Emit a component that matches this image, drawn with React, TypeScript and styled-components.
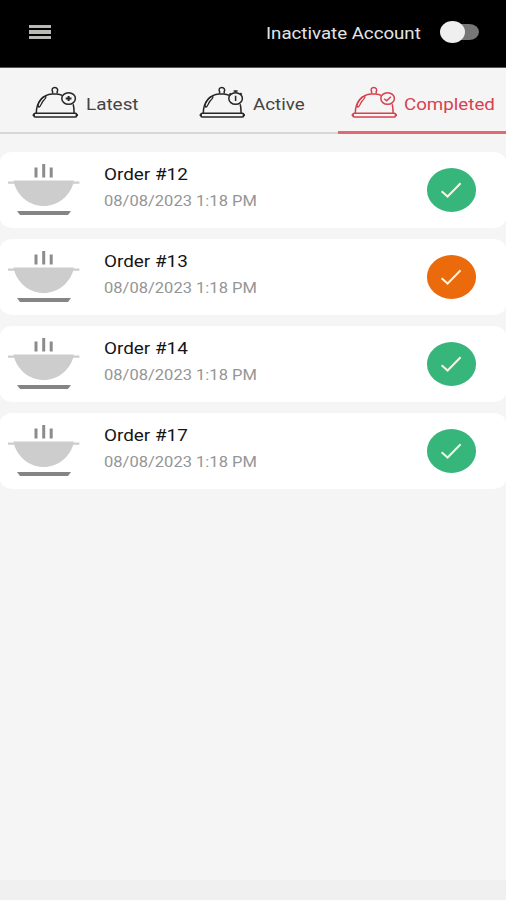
import React from 'react';
import styled, { createGlobalStyle } from 'styled-components';

const GlobalStyle = createGlobalStyle`
  * { box-sizing: border-box; }
  body { margin: 0; background: #f4f4f4; font-family: Roboto, "Liberation Sans", sans-serif; }
`;

const Screen = styled.div`
  display: flex;
  flex-direction: column;
  height: 900px;
  overflow: hidden;
  background: #f5f5f5;
`;

const Header = styled.header`
  display: flex;
  align-items: center;
  height: 68px;
  padding: 0 27px 2px 29px;
  background: #000;
  border-bottom: 1px solid #555;
`;

const MenuButton = styled.button`
  display: flex;
  flex-direction: column;
  gap: 2px;
  width: 22px;
  margin-top: -1px;
  padding: 0;
  border: 0;
  background: none;
`;

const MenuBar = styled.span`
  height: 3.4px;
  background: #b9b9b6;
`;

/* Wide-set text: the glyphs are stretched horizontally from the left edge. */
const WideText = styled.span<{ $size: number; $width: number; $stretch: number; $color: string }>`
  display: block;
  width: ${(p) => p.$width}px;
  font-size: ${(p) => p.$size}px;
  line-height: 20px;
  color: ${(p) => p.$color};
  white-space: nowrap;
  transform: scaleX(${(p) => p.$stretch});
  transform-origin: left center;
`;

const AccountControl = styled.div`
  display: flex;
  align-items: center;
  gap: 20px;
  margin-left: auto;
  padding-top: 3px;
`;

const SwitchTrack = styled.span`
  display: flex;
  align-items: center;
  width: 38px;
  height: 16px;
  margin-top: -4px;
  border-radius: 10px / 8px;
  background: #777;
`;

const SwitchKnob = styled.span`
  width: 25px;
  height: 22px;
  margin-left: -1px;
  border-radius: 50%;
  background: #efefef;
`;

const Tabs = styled.nav`
  display: grid;
  grid-template-columns: 169px 169px 168px;
  height: 66px;
`;

const Tab = styled.button<{ $active: boolean; $left: number; $gap: number }>`
  display: flex;
  align-items: center;
  gap: ${(p) => p.$gap}px;
  height: ${(p) => (p.$active ? 66 : 65.5)}px;
  padding: ${(p) => (p.$active ? 6 : 5.5)}px 0 0 ${(p) => p.$left}px;
  border: 0;
  border-bottom: ${(p) => (p.$active ? '3px solid #df6a73' : '2px solid #d6d6d6')};
  background: none;
  color: ${(p) => (p.$active ? '#d5414d' : '#262626')};
  font-family: inherit;
  text-align: left;

  ${WideText} {
    padding-top: 5px;
  }
`;

const Cloche = styled.svg`
  flex: none;
  width: 46px;
  height: 33px;
  fill: none;
  stroke: currentColor;
  stroke-width: 1.5;
`;

const OrderList = styled.main`
  display: flex;
  flex-direction: column;
  gap: 11.1px;
  padding-top: 18px;
  flex: 1;
`;

const OrderCard = styled.article`
  display: flex;
  align-items: center;
  height: 76px;
  padding: 0 30px 0 7px;
  border-radius: 12px / 10px;
  background: #fff;
`;

const BowlIcon = styled.svg`
  width: 74px;
  height: 54px;
  margin-right: 23px;
`;

const OrderInfo = styled.div`
  display: flex;
  flex-direction: column;
  gap: 7px;
  margin-top: -3px;
`;

const StatusBadge = styled.span<{ $color: string }>`
  display: flex;
  align-items: center;
  justify-content: center;
  width: 49.5px;
  height: 44px;
  margin: -1px 0 0 auto;
  border-radius: 50%;
  background: ${(p) => p.$color};
`;

const SystemBar = styled.footer`
  height: 20px;
  background: #f0f0f0;
`;

type TabKind = 'plus' | 'timer' | 'check';

function ClocheIcon({ kind }: { kind: TabKind }) {
  return (
    <Cloche viewBox="0 0 46 33">
      <rect x="1.8" y="27.2" width="43" height="3.8" rx="1.5" />
      <path d="M1.8 28.2v1.8M44.8 28.2v1.8" strokeWidth="2.4" />
      <path d="M4.3 27C4.3 16 11 8.4 20 7.9h4.5c2.6.2 4 .5 5.6 1.4M41.2 18.2c.6 2.3.9 5 .9 8.8" />
      <path d="M20.6 7.4V5.7C19.4 3.5 20.4 1.5 22.8 1.5s3.6 2 2.4 4.2v1.7" />
      <path d="M6.9 21.2c-1.3-.8-.8-3.2.7-5.8 1.8-3 4.2-5.2 5.9-5 1.2.4-.3 2.3-2.2 4.4-2 2.2-2.4 5.9-4.4 6.4z" strokeWidth="1.3" />
      <ellipse cx="36.6" cy="12.5" rx="6.8" ry="5.8" />
      {kind === 'plus' && <path d="M33.7 12.5h5.8M36.6 10v5" strokeWidth="2" />}
      {kind === 'timer' && <path d="M36.6 9.7v5.4M36.6 6.6V4.9M34.6 5h4M41.3 7.2l1.5 1.2M31.8 7.4l-1.4 1.2" />}
      {kind === 'check' && <path d="M33.3 12.7l2.3 2 4.3-4" />}
    </Cloche>
  );
}

const tabs: { label: string; kind: TabKind; left: number; gap: number; width: number; stretch: number }[] = [
  { label: 'Latest', kind: 'plus', left: 32, gap: 8, width: 52, stretch: 1.18 },
  { label: 'Active', kind: 'timer', left: 30, gap: 8, width: 52, stretch: 1.17 },
  { label: 'Completed', kind: 'check', left: 12.5, gap: 7.5, width: 90, stretch: 1.17 },
];

const orders = [
  { number: 12, color: '#37b67c' },
  { number: 13, color: '#ea6a0c' },
  { number: 14, color: '#37b67c' },
  { number: 17, color: '#37b67c' },
];

export default function App() {
  return (
    <>
      <GlobalStyle />
      <Screen>
        <Header>
          <MenuButton aria-label="Menu">
            <MenuBar />
            <MenuBar />
            <MenuBar />
          </MenuButton>
          <AccountControl>
            <WideText $size={16} $width={155} $stretch={1.167} $color="#e4e4e4">Inactivate Account</WideText>
            <SwitchTrack role="switch" aria-checked={false}>
              <SwitchKnob />
            </SwitchTrack>
          </AccountControl>
        </Header>
        <Tabs>
          {tabs.map((tab) => (
            <Tab key={tab.kind} $active={tab.kind === 'check'} $left={tab.left} $gap={tab.gap}>
              <ClocheIcon kind={tab.kind} />
              <WideText $size={16} $width={tab.width} $stretch={tab.stretch} $color={tab.kind === 'check' ? '#d5414d' : '#444'}>
                {tab.label}
              </WideText>
            </Tab>
          ))}
        </Tabs>
        <OrderList>
          {orders.map((order) => (
            <OrderCard key={order.number}>
              <BowlIcon viewBox="0 0 74 54">
                <path d="M29 4.5v10M36.7 1v13.5M44.2 4.5v10" stroke="#8c8c8c" strokeWidth="3" />
                <path d="M1 18.5h6l-.8-1h61l-.8 1h6v2.2h-6.2C62.5 33 51 43 36.7 43S11 33 7.2 20.7H1z" fill="#cdcdcd" />
                <path d="M10 48h54l-3 4H13z" fill="#858585" />
              </BowlIcon>
              <OrderInfo>
                <WideText $size={16} $width={84} $stretch={1.18} $color="#151515">Order #{order.number}</WideText>
                <WideText $size={14.5} $width={154} $stretch={1.14} $color="#959595">08/08/2023 1:18 PM</WideText>
              </OrderInfo>
              <StatusBadge $color={order.color}>
                <svg width="22" height="18" viewBox="0 0 22 18" fill="none" stroke="#f2f5df" strokeWidth="2">
                  <path d="M1.6 10.2l6 5.3L20.6 2.2" />
                </svg>
              </StatusBadge>
            </OrderCard>
          ))}
        </OrderList>
        <SystemBar />
      </Screen>
    </>
  );
}
